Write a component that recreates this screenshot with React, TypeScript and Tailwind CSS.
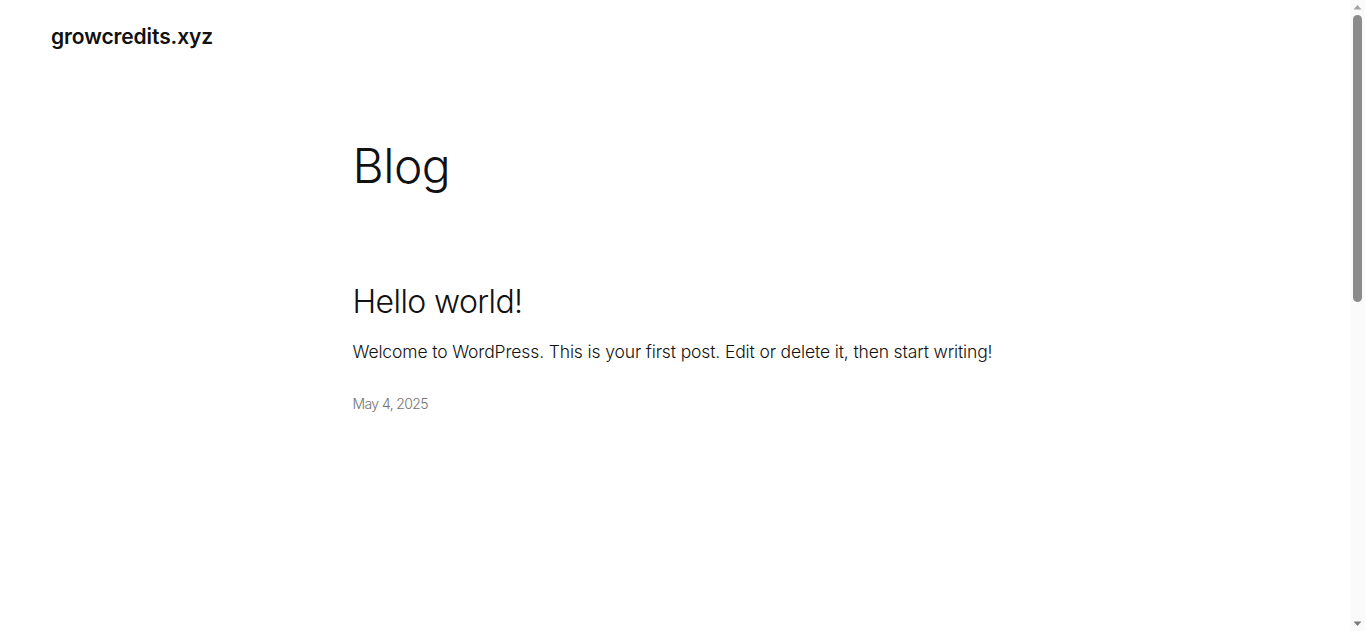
export default function App() {
  return (
    <div className="flex h-screen overflow-hidden bg-white text-[#111111]" style={{ fontFamily: 'Inter, "Noto Sans", sans-serif' }}>
      <div className="flex-1 min-h-[1320px]">
        <header className="px-[51px] pt-[26px]">
          <p className="text-[21px] leading-[21px] font-semibold tracking-[-0.1px]">growcredits.xyz</p>
        </header>
        <main className="mx-auto w-[645px]">
          <h1 className="mt-[95px] text-[48px] leading-[48px] font-light tracking-[-0.5px]">Blog</h1>
          <h2 className="mt-[96px] text-[32px] leading-[32px] font-light tracking-[-0.6px]">Hello world!</h2>
          <p className="mt-[25px] whitespace-nowrap text-[17.5px] leading-[18px] font-light tracking-[-0.13px]">
            Welcome to WordPress. This is your first post. Edit or delete it, then start writing!
          </p>
          <p className="mt-[35px] text-[14px] leading-[15px] font-light tracking-[-0.6px] text-[#727272]">May 4, 2025</p>
        </main>
      </div>
      <div className="flex w-[15px] shrink-0 flex-col items-center bg-[#fafafa]">
        <svg width="15" height="15" viewBox="0 0 15 15" className="shrink-0">
          <path d="M3.5 9.5 L7.5 5 L11.5 9.5 Z" fill="#a3a3a3" />
        </svg>
        <div className="h-[287px] w-[9px] shrink-0 rounded-full bg-[#8b8b8b]" />
        <div className="flex-1" />
        <svg width="15" height="15" viewBox="0 0 15 15" className="shrink-0">
          <path d="M3.5 5.5 L7.5 10 L11.5 5.5 Z" fill="#7a7a7a" />
        </svg>
      </div>
    </div>
  );
}
